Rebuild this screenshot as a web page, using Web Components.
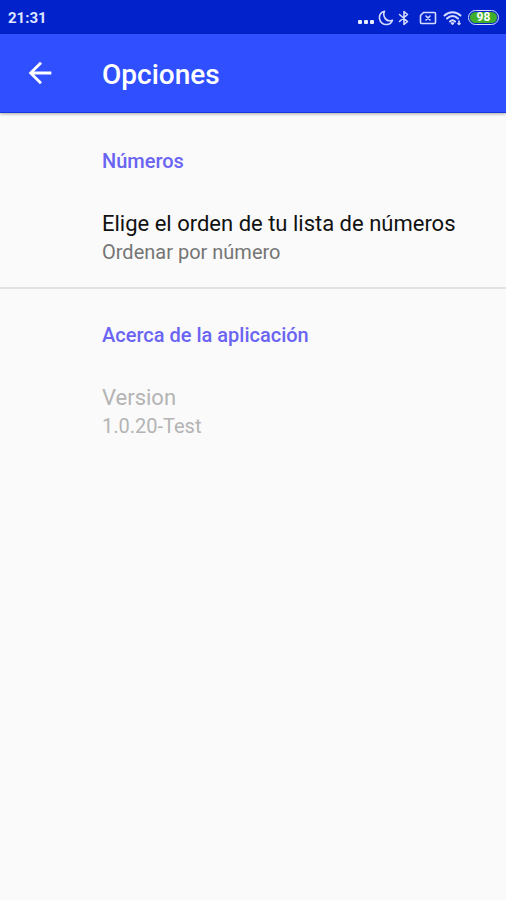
<!DOCTYPE html>
<html lang="es">
<head>
<meta charset="utf-8">
<meta name="viewport" content="width=device-width, initial-scale=1">
<title>Opciones</title>
<style>
html, body { margin: 0; min-height: 100%; background: #fafafa; }
body { font-family: Roboto, "Noto Sans", sans-serif; color: #111; }
</style>
</head>
<body>
<settings-screen></settings-screen>
<script>
const define = (name, html) => {
  const template = document.createElement('template');
  template.innerHTML = html;
  customElements.define(name, class extends HTMLElement {
    constructor() {
      super();
      this.attachShadow({ mode: 'open' }).append(template.content.cloneNode(true));
    }
  });
};

define('status-bar', `
<style>
:host { display: flex; align-items: center; justify-content: space-between; height: 34px; padding: 0 7px 0 8px; background: #0223cc; color: #dfe6ff; font-size: 15px; font-weight: 700; line-height: 20px; }
time { padding-top: 2px; }
.icons { display: flex; align-items: center; }
</style>
<time><slot></slot></time>
<div class="icons"><slot name="icons"></slot></div>`);

define('status-icons', `
<style>
:host { display: flex; align-items: center; padding-top: 1px; }
svg { display: block; fill: none; stroke: #d5dcff; stroke-width: 1.6; stroke-linecap: round; stroke-linejoin: round; }
.dots { fill: #e6ebff; stroke: none; }
.moon { margin-left: 3px; }
.bt { margin-left: 4px; }
.sim { margin-left: 9px; }
.wifi { margin-left: 6px; }
.battery { box-sizing: border-box; display: flex; align-items: center; justify-content: center; width: 31px; height: 15px; margin-left: 5px; border: 1px solid #d5dcff; border-radius: 8px; padding: 1px; }
.level { display: flex; align-items: center; justify-content: center; width: 100%; height: 11px; border-radius: 6px; background: #3fae2a; color: #fff; font-size: 12px; line-height: 11px; font-weight: 700; }
</style>
<svg class="dots" width="17" height="18" viewBox="0 0 17 18"><rect x="0" y="11" width="4" height="4" rx="1"/><rect x="6" y="11" width="4" height="4" rx="1"/><rect x="12" y="11" width="4" height="4" rx="1"/></svg>
<svg class="moon" width="16" height="18" viewBox="0 0 16 18"><path d="M6.500 2.200C2.900 3.300 1 6.300 1.600 9.800C2.200 13.400 5.200 15.800 8.600 15.500C11.300 15.300 13.600 13.600 14.400 11.200C11.500 12.300 8.400 11.400 6.900 9C5.500 6.700 5.400 4.400 6.500 2.200Z"/></svg>
<svg class="bt" width="12" height="18" viewBox="0 0 12 18"><path d="M1.500 5.500L9.500 12.500L6 15.500V2.500L9.500 5.500L1.500 12.500"/></svg>
<svg class="sim" width="18" height="18" viewBox="0 0 18 18"><path d="M4.500 3.500H15.500Q16.500 3.500 16.500 4.500V13.500Q16.500 14.500 15.500 14.500H2.500Q1.500 14.500 1.500 13.500V6.500ZM7 7L11 11M11 7L7 11"/></svg>
<svg class="wifi" width="20" height="18" viewBox="0 0 20 18"><path stroke-width="2" d="M1.500 6.500C6 2 13 2 17.500 6.500M4 9.500C7.300 6.300 11.700 6.300 15 9.500M7 12.500C8.500 11 10.500 11 12 12.500"/><path fill="#d5dcff" d="M9.500 15.200L8.500 14H10.500Z"/><path d="M16 12V15.500M15 14.500L16 15.500L17 14.500"/></svg>
<div class="battery"><span class="level">98</span></div>`);

define('app-bar', `
<style>
:host { display: flex; align-items: center; height: 79px; box-sizing: border-box; padding: 0 16px; gap: 38px; background: #3050ff; border-bottom: 1px solid #1837dc; box-shadow: 0 1px 3px #0005; position: relative; color: #fff; }
button { display: grid; place-items: center; width: 48px; height: 48px; margin: 0; padding: 0; border: 0; background: none; color: inherit; }
svg { fill: currentColor; }
h1 { margin: 0; padding-top: 3px; font-size: 28px; line-height: 36px; font-weight: 500; }
</style>
<button type="button" aria-label="Volver"><svg width="34" height="34" viewBox="0 0 24 24"><path d="M20 11H7.830l5.590-5.590L12 4l-8 8 8 8 1.410-1.410L7.830 13H20v-2z"/></svg></button>
<h1><slot></slot></h1>`);

define('settings-group', `
<style>
:host { display: block; padding: 34px 16px 21px 102px; }
:host([divided]) { border-bottom: 2px solid #e2e2e2; }
h2 { margin: 0 0 37px; color: #6a64f2; font-size: 20px; line-height: 24px; font-weight: 500; }
</style>
<h2><slot name="heading"></slot></h2>
<slot></slot>`);

define('settings-item', `
<style>
:host { display: block; color: #111; --summary: #757575; }
:host([disabled]) { color: #b4b4b4; --summary: #b4b4b4; }
.title { font-size: 22px; line-height: 28px; }
.summary { font-size: 20px; line-height: 28px; color: var(--summary); }
</style>
<div class="title"><slot></slot></div>
<div class="summary"><slot name="summary"></slot></div>`);

define('settings-screen', `
<style>
:host { display: block; min-height: 100vh; background: #fafafa; }
main { padding-top: 2px; }
</style>
<status-bar>21:31<status-icons slot="icons"></status-icons></status-bar>
<app-bar>Opciones</app-bar>
<main>
<settings-group divided><span slot="heading">Números</span>
<settings-item>Elige el orden de tu lista de números<span slot="summary">Ordenar por número</span></settings-item></settings-group>
<settings-group><span slot="heading">Acerca de la aplicación</span>
<settings-item disabled>Version<span slot="summary">1.0.20-Test</span></settings-item></settings-group>
</main>`);
</script>
</body>
</html>
